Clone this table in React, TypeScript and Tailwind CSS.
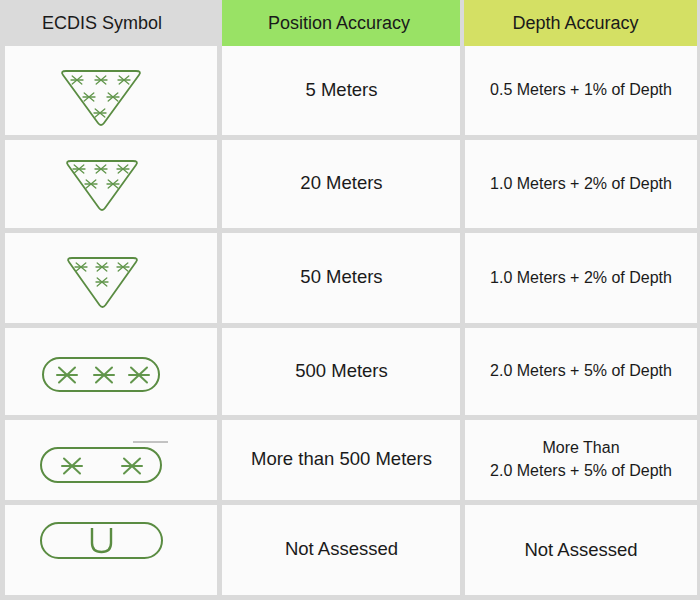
const GREEN = "#5a8c42";

function Star({ x, y, w = 6, h = 4, s = 1.3 }: { x: number; y: number; w?: number; h?: number; s?: number }) {
  const d = w * 0.8;
  return (
    <g stroke="#62964c" strokeWidth={s} strokeLinecap="round">
      <line x1={x - w} y1={y} x2={x + w} y2={y} />
      <line x1={x - d} y1={y - h} x2={x + d} y2={y + h} />
      <line x1={x - d} y1={y + h} x2={x + d} y2={y - h} />
    </g>
  );
}

function Triangle({ l, r, top, apex }: { l: number; r: number; top: number; apex: number }) {
  const m = (l + r) / 2;
  const path = `M ${l + 5} ${top} L ${r - 5} ${top} Q ${r + 1} ${top} ${r - 2} ${top + 4} L ${m + 3} ${apex - 3} Q ${m} ${apex + 1} ${m - 3} ${apex - 3} L ${l + 2} ${top + 4} Q ${l - 1} ${top} ${l + 5} ${top} Z`;
  return <path d={path} fill="none" stroke={GREEN} strokeWidth={1.8} strokeLinejoin="round" />;
}

function Capsule({ l, r, top, bottom }: { l: number; r: number; top: number; bottom: number }) {
  const h = bottom - top;
  return <rect x={l} y={top} width={r - l} height={h} rx={h / 2} fill="none" stroke={GREEN} strokeWidth={2} />;
}

function Symbol({ row, h }: { row: number; h: number }) {
  return (
    <svg width="212" height={h} viewBox={`0 0 212 ${h}`} className="block">
      {row === 0 && (
        <>
          <Triangle l={56} r={136} top={25} apex={80} />
          <Star x={72} y={34} />
          <Star x={96} y={34} />
          <Star x={119} y={34} />
          <Star x={84} y={51} />
          <Star x={108} y={51} />
          <Star x={95} y={67} />
        </>
      )}
      {row === 1 && (
        <>
          <Triangle l={61} r={133} top={21} apex={71} />
          <Star x={74} y={29} />
          <Star x={96} y={29} />
          <Star x={118} y={29} />
          <Star x={86} y={44} />
          <Star x={108} y={44} />
        </>
      )}
      {row === 2 && (
        <>
          <Triangle l={62} r={133} top={25} apex={75} />
          <Star x={76} y={34} />
          <Star x={97} y={34} />
          <Star x={118} y={34} />
          <Star x={97} y={49} />
        </>
      )}
      {row === 3 && (
        <>
          <Capsule l={38} r={154} top={30} bottom={63} />
          <Star x={62} y={47} w={10} h={7.5} s={2} />
          <Star x={99} y={47} w={10} h={7.5} s={2} />
          <Star x={134} y={47} w={10} h={7.5} s={2} />
        </>
      )}
      {row === 4 && (
        <>
          <line x1={128} y1={22} x2={163} y2={22} stroke="#8a8a8a" strokeWidth={1} />
          <Capsule l={36} r={156} top={28} bottom={62} />
          <Star x={67} y={46} w={10} h={7.5} s={2} />
          <Star x={127} y={46} w={10} h={7.5} s={2} />
        </>
      )}
      {row === 5 && (
        <>
          <Capsule l={36} r={157} top={18} bottom={53} />
          <path d="M 87 23 L 87 38 Q 87 47 96.5 47 Q 106 47 106 38 L 106 23" fill="none" stroke={GREEN} strokeWidth={2.4} />
        </>
      )}
    </svg>
  );
}

const rows = [
  { h: "h-[89px]", px: 89, pos: "5 Meters", depth: ["0.5 Meters + 1% of Depth"] },
  { h: "h-[88px]", px: 88, pos: "20 Meters", depth: ["1.0 Meters + 2% of Depth"] },
  { h: "h-[90px]", px: 90, pos: "50 Meters", depth: ["1.0 Meters + 2% of Depth"] },
  { h: "h-[87px]", px: 87, pos: "500 Meters", depth: ["2.0 Meters + 5% of Depth"] },
  { h: "h-[80px]", px: 80, pos: "More than 500 Meters", depth: ["More Than", "2.0 Meters + 5% of Depth"] },
  { h: "h-[90px]", px: 90, pos: "Not Assessed", depth: [] as string[], big: "Not Assessed" },
];

export default function App() {
  return (
    <div
      className="w-[700px] h-[600px] bg-[#dadada] text-[#1a1a1a] pl-[5px] overflow-hidden"
      style={{ fontFamily: '"Liberation Sans", Arial, sans-serif' }}
    >
      <div className="grid grid-cols-[212px_238px_232px] gap-x-[5px] h-[46px] text-[18px]">
        <div className="flex items-center justify-center pr-[18px]">ECDIS Symbol</div>
        <div className="flex items-center justify-center bg-[#99e265] pr-[4px]">Position Accuracy</div>
        <div className="flex items-center justify-center bg-[#d4e064] pr-[10px] -ml-px">Depth Accuracy</div>
      </div>
      <div className="flex flex-col gap-y-[5px]">
        {rows.map((r, i) => (
          <div key={i} className={`grid grid-cols-[212px_238px_232px] gap-x-[5px] ${r.h}`}>
            <div className="bg-[#fbfbfb]">
              <Symbol row={i} h={r.px} />
            </div>
            <div className="bg-[#fbfbfb] flex items-center justify-center pl-[1px] pb-[2px] text-[18.5px]">{r.pos}</div>
            <div className="bg-[#fbfbfb] flex flex-col items-center justify-center text-[16px] leading-[23px] pb-[2px]">
              {r.big ? (
                <span className="text-[18.5px]">{r.big}</span>
              ) : (
                r.depth.map((t) => <span key={t}>{t}</span>)
              )}
            </div>
          </div>
        ))}
      </div>
    </div>
  );
}
